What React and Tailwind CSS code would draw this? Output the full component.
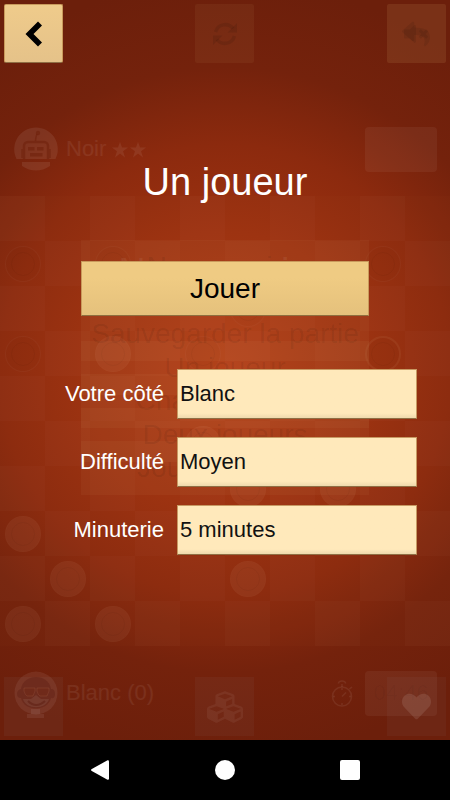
import React from "react";
import { FaReply, FaVolumeMute, FaCubes, FaHeart } from "react-icons/fa";

const PIECES = {
  "1-0": "dark", "1-2": "dark", "1-8": "dark",
  "2-5": "dark",
  "3-0": "dark", "3-2": "light", "3-4": "dark", "3-8": "marked",
  "5-4": "light",
  "6-5": "light", "6-7": "light",
  "7-0": "light",
  "8-1": "light", "8-5": "light",
  "9-0": "light", "9-2": "light",
};

const PIECE_STYLE = {
  dark: "border-white/[0.03] bg-black/[0.01]",
  light: "border-white/[0.01] bg-[#ffe0c0]/[0.06]",
  marked: "border-2 border-[#ffd0a0]/[0.07] bg-black/[0.02]",
};

const CELLS = Array.from({ length: 100 }, (_, i) => {
  const row = Math.floor(i / 10);
  const col = i % 10;
  return { key: `${row}-${col}`, light: (row + col) % 2 === 0 };
});

function Piece({ kind }) {
  return (
    <span className={`grid size-9 place-items-center rounded-full border ${PIECE_STYLE[kind]}`}>
      <span className="size-6 rounded-full border border-black/[0.04]" />
    </span>
  );
}

function Board() {
  return (
    <div className="grid aspect-square w-full grid-cols-10 grid-rows-10 bg-[#ffb070]/[0.015]">
      {CELLS.map(({ key, light }) => (
        <div
          key={key}
          className={`grid place-items-center ${light ? "bg-[#ffe0c0]/[0.025]" : "bg-transparent"}`}
        >
          {PIECES[key] && <Piece kind={PIECES[key]} />}
        </div>
      ))}
    </div>
  );
}

function RobotIcon() {
  return (
    <svg viewBox="0 0 44 44" className="size-11" aria-hidden="true">
      <path d="M2.500 32a21.800 21.800 0 1 1 39 0zM8 35h28v4q-14 9-28 0z" fill="#fff" fillOpacity=".08" />
      <g stroke="#6f210c" strokeOpacity=".6" fill="none">
        <path d="M10 32V19a4 4 0 0 1 4-4h16a4 4 0 0 1 4 4v13" strokeWidth="2.500" />
        <path d="M21.500 14c0-3 .5-5 1.500-7" strokeWidth="1.500" />
        <path d="M8 22v9M36 22v9" strokeWidth="1.500" />
      </g>
      <g fill="#6f210c" fillOpacity=".6">
        <circle cx="24" cy="6" r="2.200" />
        <path d="M14 20h6.500v3.500H14zM23 20h6.500v3.500H23z" />
        <path fillRule="evenodd" d="M16 26h12.500v3.500H16z" />
      </g>
    </svg>
  );
}

function MonkeyIcon() {
  return (
    <svg viewBox="0 0 44 48" className="h-12 w-11" aria-hidden="true">
      <circle cx="22" cy="22" r="21.500" fill="#fff" fillOpacity=".07" />
      <path d="M7 18C9 2 35 2 37 18q4 0 4 5t-4 4C34 41 10 41 7 27q-4 0-4-4t4-5z" fill="#5d190a" fillOpacity=".45" />
      <path d="M9 28h8l5-4 5 4h8c-3 11-23 11-26 0z" fill="#fff" fillOpacity=".07" />
      <path d="M10 17h11v3l-2 5h-6q-2-1-3-5zM23 17h12v3l-2 5h-7q-2-1-3-5z" fill="#6f210c" fillOpacity=".5" stroke="#ffb090" strokeOpacity=".1" />
      <path d="M14 30q8 8 17 0" fill="none" stroke="#5d190a" strokeOpacity=".6" strokeWidth="2" />
      <path d="M17 38h9v5h4v4H13v-4h4z" fill="#fff" fillOpacity=".07" />
    </svg>
  );
}

function RefreshIcon() {
  return (
    <svg viewBox="0 0 26 26" className="size-[26px]" aria-hidden="true">
      <path d="M3.500 11a10 10 0 0 1 17.500-3.500M22.500 15a10 10 0 0 1-17.500 3.500" fill="none" stroke="currentColor" strokeWidth="3.500" />
      <path d="M25 2v9.500h-9.500zM1 24v-9.500h9.500z" fill="currentColor" />
    </svg>
  );
}

function StopwatchIcon() {
  return (
    <svg viewBox="0 0 22 28" className="h-7 w-[22px] text-white/[0.07]" fill="none" stroke="currentColor" strokeWidth="1.500" aria-hidden="true">
      <circle cx="11" cy="17.500" r="9.500" />
      <path d="M11 17.500l4-4M11 8V5M7.500 4.500C7 1 15 1 14.500 4.500M18.500 10l2.500-2M11 9v2M11 24v2M2 17.500h2M18 17.500h2" />
    </svg>
  );
}

function PlayerRow({ icon, name, timer, time }) {
  return (
    <div className="flex h-11 items-center pl-3.5 pr-[13px] text-white/[0.07]">
      <div className="flex h-11 w-11 items-start">{icon}</div>
      <span className="ml-2 flex-1 text-[22px] leading-7">{name}</span>
      {timer && <StopwatchIcon />}
      <span className="ml-3 grid h-[45px] w-[72px] place-items-center rounded bg-white/[0.05] text-[22px] leading-6 text-black/[0.04]">
        {time}
      </span>
    </div>
  );
}

function Stars() {
  return (
    <svg viewBox="0 0 34 18" className="inline h-[18px] w-[34px] align-[-3px]" fill="currentColor" aria-hidden="true">
      <path d="M8 1l2 5.500h6l-5 3.700 2 6.300-5-4-5 4 2-6.300-5-3.700h6zM26 1l2 5.500h6l-5 3.700 2 6.300-5-4-5 4 2-6.300-5-3.700h6z" />
    </svg>
  );
}

function GameLayer() {
  return (
    <div className="flex flex-col gap-[25px] pb-[25px] pt-[127px] [grid-area:1/1]">
      <PlayerRow icon={<RobotIcon />} name={<>Noir <Stars /></>} />
      <Board />
      <PlayerRow icon={<MonkeyIcon />} name="Blanc (0)" timer time="04:46" />
    </div>
  );
}

function ToolbarLayer() {
  return (
    <div className="flex flex-col justify-between px-1 py-1 [grid-area:1/1]">
      <div className="grid grid-cols-3">
        <span />
        <span className="grid size-[59px] place-items-center justify-self-center rounded-xs bg-[#edc983]/[0.06] text-black/[0.09]">
          <RefreshIcon />
        </span>
        <span className="grid size-[59px] place-items-center justify-self-end rounded-xs bg-[#edc983]/[0.11] text-black/[0.08]">
          <FaReply className="size-7 [grid-area:1/1]" />
          <FaVolumeMute className="size-6 [grid-area:1/1]" />
        </span>
      </div>
      <div className="grid grid-cols-3 text-white/[0.06]">
        <span className="size-[59px] bg-[#a0b0c0]/[0.06]" />
        <span className="grid size-[59px] place-items-center justify-self-center bg-[#a0b0c0]/[0.05]">
          <FaCubes className="size-9" />
        </span>
        <span className="grid size-[59px] place-items-center justify-self-end bg-[#a0b0c0]/[0.05] text-white/10">
          <FaHeart className="size-[29px]" />
        </span>
      </div>
    </div>
  );
}

function GhostButton({ children }) {
  return (
    <div className="grid h-[54px] w-[64%] place-items-center bg-[#edc983]/[0.05] text-[28px] leading-8 text-black/[0.08]">
      {children}
    </div>
  );
}

function MenuLayers() {
  return (
    <>
      <div className="flex flex-col items-center gap-[13px] pt-60 [grid-area:1/1]">
        <GhostButton>Nouveau jeu</GhostButton>
        <GhostButton>Sauvegarder la partie</GhostButton>
        <GhostButton>Charger partie</GhostButton>
        <GhostButton>Jouer en ligne</GhostButton>
      </div>
      <div className="flex flex-col items-center gap-[13px] pt-[250px] [grid-area:1/1]">
        <div className="h-[78px] text-[38px] leading-[44px] text-white/[0.08]">Nouveau jeu</div>
        <GhostButton>Un joueur</GhostButton>
        <GhostButton>Deux joueurs</GhostButton>
      </div>
    </>
  );
}

function Field({ id, label, options }) {
  return (
    <>
      <label htmlFor={id} className="text-right text-[22px] leading-7 text-white">
        {label}
      </label>
      <select
        id={id}
        className="h-[50px] w-full appearance-none border border-[#c79a63] border-b-[#8f6f45] bg-[#ffe9bb] bg-linear-to-b from-[#ffe9bb] from-90% to-[#eed9ad] px-0.5 text-[22px] leading-7 text-[#111] outline-none"
      >
        {options.map((option) => (
          <option key={option}>{option}</option>
        ))}
      </select>
    </>
  );
}

function SetupScreen() {
  return (
    <main className="flex flex-col items-stretch p-1 [grid-area:1/1]">
      <button
        type="button"
        aria-label="Retour"
        className="grid size-[59px] place-items-center rounded-xs border border-[#c99a5c] border-b-[#8f6f45] bg-linear-to-b from-[#efcb8b] to-[#e5c289]"
      >
        <svg viewBox="0 0 18 28" className="h-7 w-[18px]" aria-hidden="true">
          <path d="M0.500 14L13 1.500L17 5.500L8.500 14L17 22.500L13 26.500Z" fill="#000" />
        </svg>
      </button>
      <h1 className="mt-[97px] text-center text-[38px] leading-[44px] text-white">Un joueur</h1>
      <button
        type="button"
        className="mt-[57px] h-[55px] w-[288px] self-center border border-[#c99a5c] border-b-[#8f6f3f] bg-linear-to-b from-[#efcb83] from-30% to-[#e5c17c] text-[28px] leading-8 text-black"
      >
        Jouer
      </button>
      <form className="mt-[53px] grid grid-cols-[2fr_3fr] items-center gap-x-[13px] gap-y-[18px] pr-[29px]">
        <Field id="side" label="Votre côté" options={["Blanc", "Noir"]} />
        <Field id="level" label="Difficulté" options={["Moyen", "Facile", "Difficile"]} />
        <Field id="clock" label="Minuterie" options={["5 minutes", "10 minutes", "15 minutes"]} />
      </form>
    </main>
  );
}

function NavigationBar() {
  return (
    <nav className="flex h-15 items-center justify-around bg-black px-[37px]">
      <button type="button" aria-label="Précédent">
        <svg viewBox="0 0 20 20" className="size-5" fill="#fff" aria-hidden="true">
          <path d="M1.800 9L17.500 0.300Q19 0 19 1.500V18.500Q19 20 17.500 19.700L1.800 11Q0.200 10 1.800 9Z" />
        </svg>
      </button>
      <button type="button" aria-label="Accueil" className="size-5 rounded-full bg-white" />
      <button type="button" aria-label="Applications récentes" className="size-5 rounded-xs bg-white" />
    </nav>
  );
}

export default function App() {
  return (
    <div className="font-['Liberation_Sans',Arial,sans-serif]">
      <div className="grid grid-cols-1 bg-[radial-gradient(circle_at_center,#b03a14_0%,#9c3110_32%,#8c2a0e_52%,#74220c_70%,#6c1f0b_90%)]">
        <GameLayer />
        <ToolbarLayer />
        <MenuLayers />
        <SetupScreen />
      </div>
      <NavigationBar />
    </div>
  );
}
